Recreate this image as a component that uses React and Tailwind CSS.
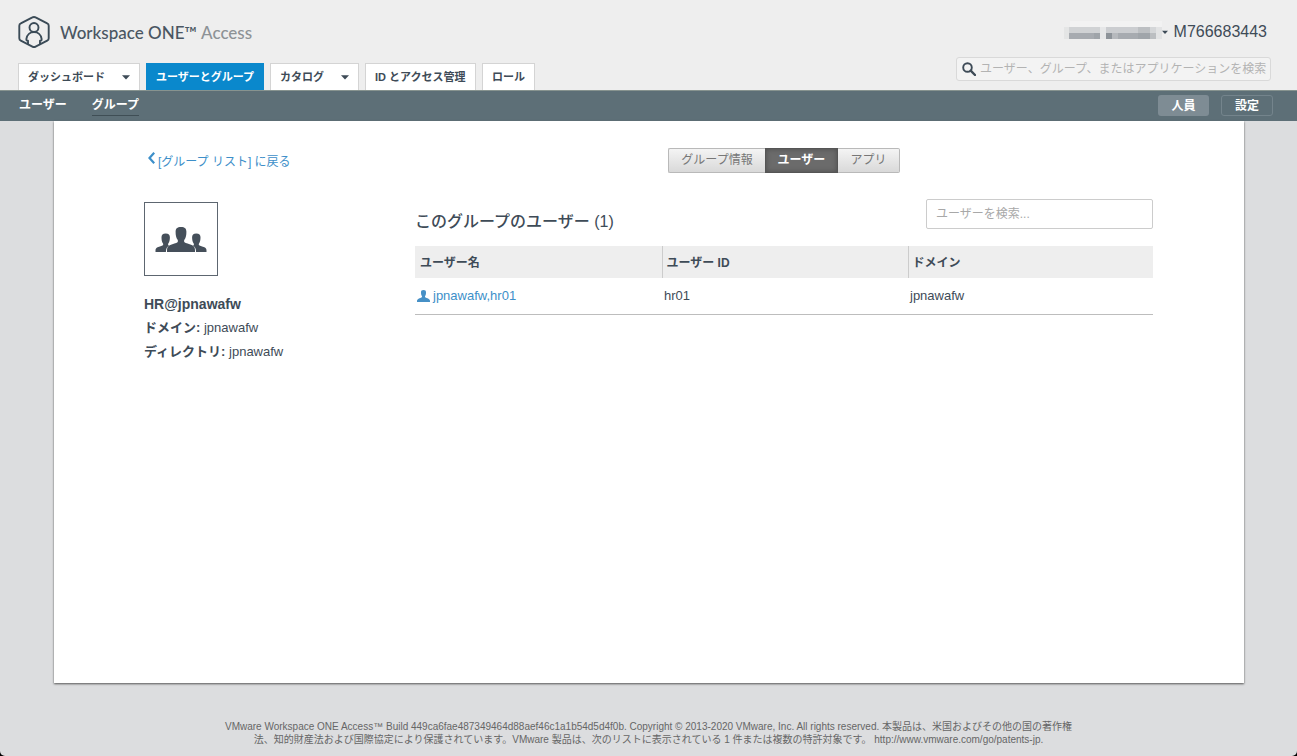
import React from "react";

const font = "font-['Liberation_Sans','Noto_Sans_CJK_JP',sans-serif]";

function Caret({ className = "w-2" }) {
  return (
    <svg viewBox="0 0 8 5" className={"h-[5px] shrink-0 fill-[#3e4b57] " + className} aria-hidden="true">
      <path d="M0 0.3H8L4 4.6Z" />
    </svg>
  );
}

function Logo() {
  return (
    <svg viewBox="0 0 32 34" className="h-[34px] w-8 shrink-0" fill="none" stroke="#3b4b57" strokeWidth="1.9" strokeLinejoin="round" aria-hidden="true">
      <path d="M14.4 2.400a3.200 3.200 0 0 1 3.200 0L29.200 8.400a2.600 2.600 0 0 1 1.500 2.400v12.400a2.600 2.600 0 0 1-1.500 2.400l-11.600 6a3.200 3.200 0 0 1-3.200 0L2.800 25.600a2.600 2.600 0 0 1-1.500-2.400V10.800a2.600 2.600 0 0 1 1.500-2.400Z" />
      <circle cx="16" cy="12.500" r="4.500" />
      <path d="M10 29.400v-3.600c-1.300 0-1.800-.6-1.600-2 .6-3.900 3.700-6.800 7.600-6.800s7 2.900 7.600 6.800c.2 1.400-.3 2-1.600 2v3.600" />
    </svg>
  );
}

function PersonShape() {
  return (
    <path d="M14 0c3.900 0 5.400 1.600 5.400 4.800 0 3.400-.5 6.200-2 8-.4.500-.4 2 .1 2.400 1.200 1 4.600 1.700 7.200 2.900 2 .9 3.300 2.400 3.300 4.900v2H0v-2c0-2.500 1.300-4 3.300-4.900 2.600-1.200 6-1.900 7.200-2.900.5-.4.500-1.900.1-2.400-1.500-1.800-2-4.600-2-8C8.600 1.600 10.100 0 14 0Z" />
  );
}

function GroupIcon() {
  return (
    <svg viewBox="0 0 52 25" className="h-[25px] w-[52px] fill-[#454f5a]" aria-hidden="true">
      <path d="M10.700 6.500c3 0 4.200 1.300 4.200 3.800 0 2.600-.4 4.700-1.600 6.100-.3.400-.3 1.500.1 1.800l.6.500c-2.100 1.100-3 3-3.100 6.300H.5v-1.500c0-1.600.8-2.600 2.100-3.200 1.800-.8 4.300-1.300 5.300-2.100.4-.3.400-1.400.1-1.800-1.200-1.400-1.500-3.500-1.500-6.100 0-2.500 1.200-3.800 4.200-3.800Z" />
      <path d="M41.300 6.500c-3 0-4.200 1.300-4.200 3.800 0 2.600.4 4.700 1.600 6.100.3.400.3 1.500-.1 1.800l-.6.500c2.100 1.100 3 3 3.100 6.300h10.400v-1.500c0-1.600-.8-2.600-2.100-3.200-1.800-.8-4.300-1.300-5.300-2.100-.4-.3-.4-1.400-.1-1.800 1.200-1.400 1.500-3.500 1.500-6.100 0-2.500-1.200-3.800-4.200-3.800Z" />
      <g transform="translate(12 0)">
        <PersonShape />
      </g>
    </svg>
  );
}

function MaskedName() {
  return (
    <svg viewBox="0 0 98 22" className="h-[22px] w-[98px]" aria-hidden="true">
      <rect x="6" y="0" width="92" height="6" fill="#f2f2f2" />
      <rect x="0" y="6" width="5" height="12" fill="#e4e5e5" />
      <rect x="5" y="6" width="31" height="6" fill="#d0d2d4" />
      <rect x="36" y="6" width="6" height="12" fill="#e6e7e8" />
      <rect x="42" y="6" width="32" height="6" fill="#cbcdd0" />
      <rect x="74" y="6" width="12" height="6" fill="#bcbfc2" />
      <rect x="86" y="6" width="6" height="6" fill="#d4d6d8" />
      <rect x="92" y="6" width="6" height="12" fill="#e2e3e4" />
      <rect x="5" y="12" width="25" height="6" fill="#a7abb0" />
      <rect x="30" y="12" width="6" height="6" fill="#9fa4a9" />
      <rect x="42" y="12" width="6" height="6" fill="#8d9399" />
      <rect x="48" y="12" width="6" height="6" fill="#b6b9bd" />
      <rect x="54" y="12" width="20" height="6" fill="#a7abb0" />
      <rect x="74" y="12" width="12" height="6" fill="#a0a5aa" />
      <rect x="86" y="12" width="6" height="6" fill="#bbbec1" />
    </svg>
  );
}

const tabs = [
  { label: "ダッシュボード", menu: true, width: "w-[122px]" },
  { label: "ユーザーとグループ", active: true, width: "w-[118px]" },
  { label: "カタログ", menu: true, width: "w-[89px]" },
  { label: "ID とアクセス管理", width: "w-[111px]" },
  { label: "ロール", width: "w-[53px]" },
];

function Header() {
  return (
    <header className="flex justify-between bg-[#eeeeee] pr-[26px] pl-[18px]">
      <div className="flex flex-col">
        <div className="flex h-[63px] items-center gap-[10px]">
          <Logo />
          <div className="pt-[2px] font-['Lato',sans-serif] text-[17px] leading-6 font-medium text-[#4a5662]">
            Workspace ONE™ <span className="text-[#8d9296]">Access</span>
          </div>
        </div>
        <nav className="flex gap-[6px]">
          {tabs.map((t) => (
            <button
              key={t.label}
              type="button"
              className={
                "flex h-[27px] items-center justify-between border border-b-0 px-[9px] pt-px text-[11px] font-bold whitespace-nowrap " +
                t.width +
                (t.active ? " border-[#0a88cc] bg-[#0a88cc] text-white" : " border-[#d4d4d4] bg-white text-[#3e4b57]")
              }
            >
              {t.label}
              {t.menu && <Caret />}
            </button>
          ))}
        </nav>
      </div>
      <div className="flex flex-col items-end">
        <div className="flex h-[57px] items-center pt-[7px] pr-1">
          <button type="button" aria-label="アカウント" className="flex items-center">
            <MaskedName />
            <Caret className="w-[6px]" />
          </button>
          <span className="ml-[6px] text-[16px] text-[#3e4b57]">M766683443</span>
        </div>
        <label className="flex h-6 w-[315px] items-center gap-1 rounded-[3px] border border-[#d9d9d9] bg-[#f3f3f3] pl-[5px]">
          <svg viewBox="0 0 14 14" className="h-[14px] w-[14px] shrink-0" fill="none" stroke="#3e4b57" aria-hidden="true">
            <circle cx="5.500" cy="5.500" r="4.300" strokeWidth="1.900" />
            <path d="M8.700 8.700 13 13" strokeWidth="2.400" strokeLinecap="round" />
          </svg>
          <input
            type="text"
            aria-label="検索"
            placeholder="ユーザー、グループ、またはアプリケーションを検索"
            className="h-full min-w-0 flex-1 bg-transparent text-[12px] outline-none placeholder:text-[#b3b3b3]"
          />
        </label>
      </div>
    </header>
  );
}

function SubNav() {
  return (
    <div className="flex h-[31px] items-center justify-between border-t border-[#87938f] bg-[#5d6f77] pr-6 pb-px pl-[19px] text-[12px] font-bold text-white">
      <nav className="flex gap-[25px] leading-5">
        <a href="#users" className="border-b border-transparent">ユーザー</a>
        <a href="#groups" className="border-b border-[#3f4e55]">グループ</a>
      </nav>
      <div className="flex gap-3">
        <button type="button" className="h-[21px] w-[51px] rounded-[3px] bg-[#7e8c94]">人員</button>
        <button type="button" className="h-[21px] w-[52px] rounded-[3px] border border-[#74848c] leading-none">設定</button>
      </div>
    </div>
  );
}

function Summary() {
  return (
    <aside className="pt-[2px]">
      <a href="#groups" className="flex h-5 items-center gap-[3px] pl-1 text-[12px] text-[#3d8fc9]">
        <svg viewBox="0 0 7 12" className="mb-1 h-3 w-[7px]" fill="none" stroke="#3d8fc9" strokeWidth="2.200" aria-hidden="true">
          <path d="M6.200 0.800 1.500 6 6.200 11.200" />
        </svg>
        <span className="pt-[3px]">[グループ リスト] に戻る</span>
      </a>
      <div className="mt-8 flex h-[74px] w-[74px] items-center justify-center border border-[#5d6670]">
        <GroupIcon />
      </div>
      <h1 className="mt-4 text-[14px] leading-6 font-bold">HR@jpnawafw</h1>
      <p className="leading-6"><b>ドメイン:</b> jpnawafw</p>
      <p className="leading-6"><b>ディレクトリ:</b> jpnawafw</p>
    </aside>
  );
}

function Segments() {
  const idle = "border-[#b9b9b9] bg-linear-to-b from-[#f4f4f4] to-[#d9d9d9] text-[#777777]";
  return (
    <div className="flex h-[25px] justify-center text-[12px]">
      <button type="button" className={"w-[97px] rounded-l-[2px] border border-r-0 pb-px " + idle}>グループ情報</button>
      <button type="button" className="w-[73px] border border-[#555555] bg-[#6b6b6b] pb-px font-bold text-white shadow-[inset_0_0_5px_#4d4d4d]">ユーザー</button>
      <button type="button" className={"w-[62px] rounded-r-[2px] border border-l-0 pb-px " + idle}>アプリ</button>
    </div>
  );
}

function Users() {
  return (
    <section>
      <Segments />
      <div className="mt-[26px] flex h-[30px] items-start justify-between">
        <h2 className="pt-[11px] text-[16px] leading-6 font-medium">このグループのユーザー (1)</h2>
        <input
          type="text"
          aria-label="ユーザーを検索"
          placeholder="ユーザーを検索..."
          className="h-[30px] w-[227px] rounded-[2px] border border-[#cccccc] px-[9px] text-[12px] outline-none placeholder:text-[#a8a8a8]"
        />
      </div>
      <table className="mt-[17px] w-full table-fixed border-collapse text-left">
        <thead className="h-8 bg-[#eeeeee] text-[12px]">
          <tr>
            <th className="w-[247px] pt-px pl-[5px]">ユーザー名</th>
            <th className="w-[246px] border-l border-[#cccccc] pt-px pl-1">ユーザー ID</th>
            <th className="border-l border-[#cccccc] pt-px pl-1">ドメイン</th>
          </tr>
        </thead>
        <tbody>
          <tr className="h-9 border-b border-[#bdbdbd]">
            <td className="pl-[2px]">
              <a href="#user" className="flex items-center gap-[3px] text-[#3d8fc9]">
                <svg viewBox="0 0 28 25" className="h-3 w-[13px] fill-[#4690c6]" preserveAspectRatio="none" aria-hidden="true">
                  <PersonShape />
                </svg>
                jpnawafw,hr01
              </a>
            </td>
            <td className="pl-[2px]">hr01</td>
            <td className="pl-[2px]">jpnawafw</td>
          </tr>
        </tbody>
      </table>
    </section>
  );
}

export default function App() {
  return (
    <div className="bg-black">
      <div className={"flex min-h-screen flex-col rounded-b-[5px] bg-[#dcdddf] text-[13px] text-[#3e4b57] " + font}>
        <Header />
        <SubNav />
        <main className="mr-[53px] ml-[54px] grid flex-1 grid-cols-[271px_1fr] bg-white pr-[91px] pl-[90px] pt-[27px] shadow-[0_1px_2px_#555555]">
          <Summary />
          <Users />
        </main>
        <footer className="px-6 pt-[37px] pb-[10px] text-center text-[10px] leading-[13px] text-[#666666]">
          <p className="mx-auto max-w-[850px]">
            VMware Workspace ONE Access™ Build 449ca6fae487349464d88aef46c1a1b54d5d4f0b. Copyright © 2013-2020 VMware, Inc. All rights reserved. 本製品は、米国およびその他の国の著作権法、知的財産法および国際協定により保護されています。VMware 製品は、次のリストに表示されている 1 件または複数の特許対象です。 http://www.vmware.com/go/patents-jp.
          </p>
        </footer>
      </div>
    </div>
  );
}
